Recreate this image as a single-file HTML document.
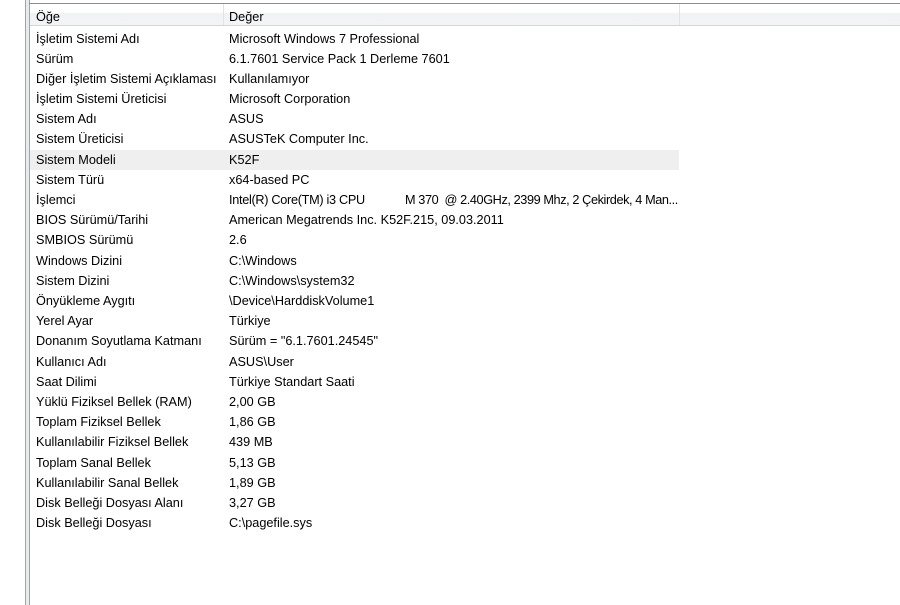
<!DOCTYPE html>
<html><head><meta charset="utf-8"><style>
body{margin:0;width:900px;height:605px;background:#fff;position:relative;overflow:hidden;font-family:"Liberation Sans",sans-serif;font-size:12.7px;color:#000}
.lb{position:absolute;left:25px;top:0;width:3px;height:605px;background:#e8eaed;border-left:1px solid #a0a4aa;border-right:1px solid #a0a4aa}
.top{position:absolute;left:29px;top:3px;right:0;height:1px;background:#8a8e94}
.hdr{position:absolute;left:30px;top:4px;right:0;height:21px;background:linear-gradient(#fff 0,#fff 40%,#f1f2f4 45%,#f3f4f6 100%);border-bottom:1px solid #d5d5d8}
.hdr span{position:absolute;top:6px}
.div{position:absolute;top:4px;width:1px;height:21px;background:#e2e3e6}
.row{position:absolute;left:30px;width:649px;height:20px;line-height:21px}
.row span{position:absolute;left:6px;white-space:nowrap}
.row span+span{left:199px}
.row span.m{left:375px;letter-spacing:-0.4px}
.hl{background:#efeff0}
</style></head><body>
<div class="lb"></div>
<div class="top"></div>
<div class="hdr"><span style="left:6px">Öğe</span><span style="left:199px">Değer</span></div>
<div class="div" style="left:223px"></div>
<div class="div" style="left:679px"></div>
<div class="row" style="top:29px"><span>İşletim Sistemi Adı</span><span>Microsoft Windows 7 Professional</span></div>
<div class="row" style="top:49px"><span>Sürüm</span><span>6.1.7601 Service Pack 1 Derleme 7601</span></div>
<div class="row" style="top:69px"><span>Diğer İşletim Sistemi Açıklaması</span><span>Kullanılamıyor</span></div>
<div class="row" style="top:89px"><span>İşletim Sistemi Üreticisi</span><span>Microsoft Corporation</span></div>
<div class="row" style="top:109px"><span>Sistem Adı</span><span>ASUS</span></div>
<div class="row" style="top:129px"><span>Sistem Üreticisi</span><span>ASUSTeK Computer Inc.</span></div>
<div class="row hl" style="top:150px"><span>Sistem Modeli</span><span>K52F</span></div>
<div class="row" style="top:170px"><span>Sistem Türü</span><span>x64-based PC</span></div>
<div class="row" style="top:190px"><span>İşlemci</span><span style="letter-spacing:-0.3px">Intel(R) Core(TM) i3 CPU</span><span class="m">M 370&nbsp;&nbsp;@ 2.40GHz, 2399 Mhz, 2 Çekirdek, 4 Man...</span></div>
<div class="row" style="top:210px"><span>BIOS Sürümü/Tarihi</span><span>American Megatrends Inc. K52F.215, 09.03.2011</span></div>
<div class="row" style="top:230px"><span>SMBIOS Sürümü</span><span>2.6</span></div>
<div class="row" style="top:251px"><span>Windows Dizini</span><span>C:\Windows</span></div>
<div class="row" style="top:271px"><span>Sistem Dizini</span><span>C:\Windows\system32</span></div>
<div class="row" style="top:291px"><span>Önyükleme Aygıtı</span><span>\Device\HarddiskVolume1</span></div>
<div class="row" style="top:311px"><span>Yerel Ayar</span><span>Türkiye</span></div>
<div class="row" style="top:331px"><span>Donanım Soyutlama Katmanı</span><span>Sürüm = "6.1.7601.24545"</span></div>
<div class="row" style="top:352px"><span>Kullanıcı Adı</span><span>ASUS\User</span></div>
<div class="row" style="top:372px"><span>Saat Dilimi</span><span>Türkiye Standart Saati</span></div>
<div class="row" style="top:392px"><span>Yüklü Fiziksel Bellek (RAM)</span><span>2,00 GB</span></div>
<div class="row" style="top:412px"><span>Toplam Fiziksel Bellek</span><span>1,86 GB</span></div>
<div class="row" style="top:432px"><span>Kullanılabilir Fiziksel Bellek</span><span>439 MB</span></div>
<div class="row" style="top:453px"><span>Toplam Sanal Bellek</span><span>5,13 GB</span></div>
<div class="row" style="top:473px"><span>Kullanılabilir Sanal Bellek</span><span>1,89 GB</span></div>
<div class="row" style="top:493px"><span>Disk Belleği Dosyası Alanı</span><span>3,27 GB</span></div>
<div class="row" style="top:513px"><span>Disk Belleği Dosyası</span><span>C:\pagefile.sys</span></div>
</body></html>
